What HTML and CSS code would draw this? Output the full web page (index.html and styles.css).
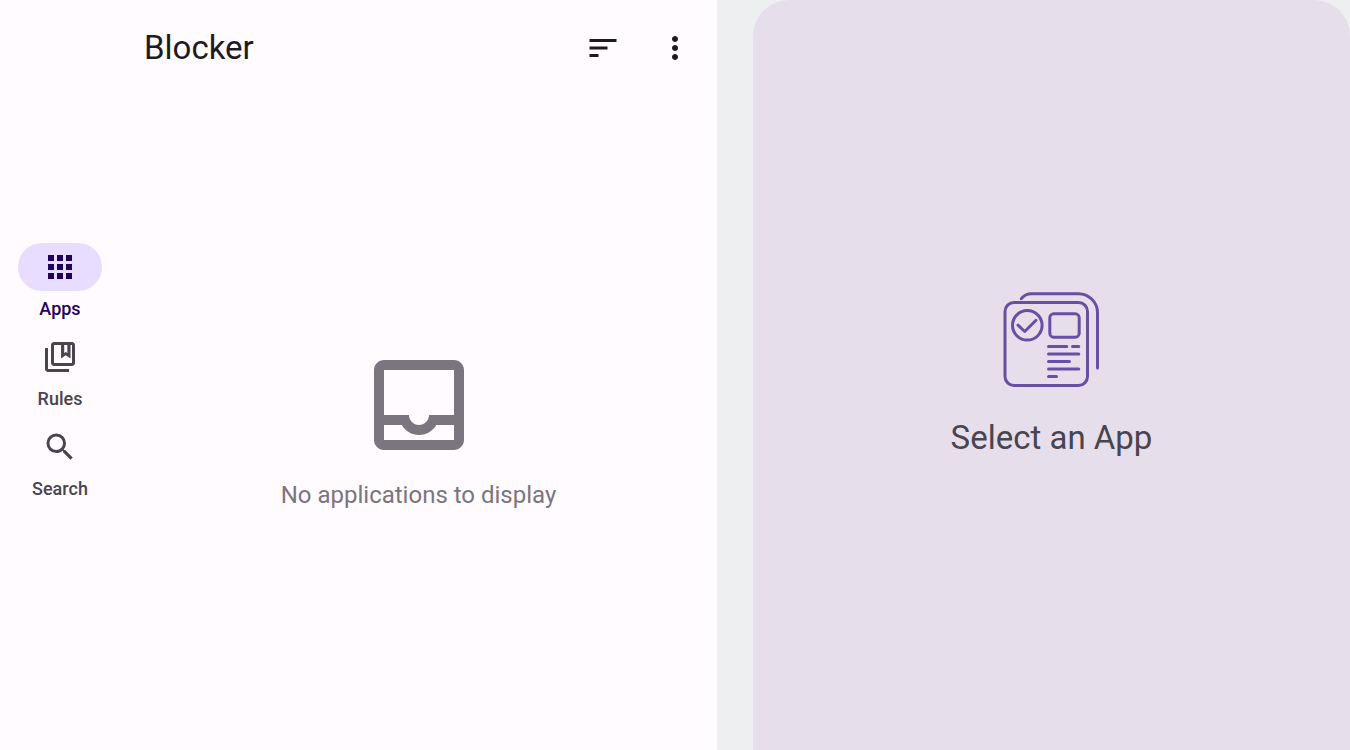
FILE: index.html
```html
<!DOCTYPE html>
<html lang="en">
<head>
<meta charset="utf-8">
<meta name="viewport" content="width=device-width, initial-scale=1">
<title>Blocker</title>
<link rel="stylesheet" href="styles.css">
</head>
<body class="app">
  <nav class="rail" aria-label="Main">
    <button class="rail-item rail-item-active" type="button" aria-current="page">
      <span class="rail-pill"><svg class="icon" viewBox="0 0 24 24" aria-hidden="true"><path d="M4 8h4V4H4v4zm6 12h4v-4h-4v4zm-6 0h4v-4H4v4zm0-6h4v-4H4v4zm6 0h4v-4h-4v4zm6-10v4h4V4h-4zm-6 4h4V4h-4v4zm6 6h4v-4h-4v4zm0 6h4v-4h-4v4z"/></svg></span>
      <span class="rail-label">Apps</span>
    </button>
    <button class="rail-item" type="button">
      <span class="rail-pill"><svg class="icon" viewBox="0 0 24 24" aria-hidden="true"><path d="M4 6H2v14c0 1.100.9 2 2 2h14v-2H4V6z"/><path d="M20 2H8c-1.100 0-2 .9-2 2v12c0 1.100.9 2 2 2h12c1.100 0 2-.9 2-2V4c0-1.100-.9-2-2-2zm0 14H8V4h12v12z"/><path fill-rule="evenodd" d="M12.700 3.500H19V13l-3.150-2.200L12.700 13zM14.800 4v5.300l1.050-.7 1.050.7V4z"/></svg></span>
      <span class="rail-label">Rules</span>
    </button>
    <button class="rail-item" type="button">
      <span class="rail-pill"><svg class="icon" viewBox="0 0 24 24" aria-hidden="true"><path d="M15.500 14h-.79l-.28-.27A6.470 6.470 0 0 0 16 9.500 6.500 6.500 0 1 0 9.500 16c1.610 0 3.090-.59 4.230-1.570l.27.28v.79l5 4.990L20.490 19l-4.990-5zm-6 0C7.010 14 5 11.990 5 9.500S7.010 5 9.500 5 14 7.010 14 9.500 11.990 14 9.500 14z"/></svg></span>
      <span class="rail-label">Search</span>
    </button>
  </nav>

  <main class="list-pane">
    <header class="top-bar">
      <h1 class="title">Blocker</h1>
      <button class="icon-button" type="button" aria-label="Sort"><svg class="icon" viewBox="0 0 24 24" aria-hidden="true"><path d="M3 18h6v-2H3v2zM3 6v2h18V6H3zm0 7h12v-2H3v2z"/></svg></button>
      <button class="icon-button" type="button" aria-label="More options"><svg class="icon" viewBox="0 0 24 24" aria-hidden="true"><path d="M12 8c1.100 0 2-.9 2-2s-.9-2-2-2-2 .9-2 2 .9 2 2 2zm0 2c-1.100 0-2 .9-2 2s.9 2 2 2 2-.9 2-2-.9-2-2-2zm0 6c-1.100 0-2 .9-2 2s.9 2 2 2 2-.9 2-2-.9-2-2-2z"/></svg></button>
    </header>
    <section class="empty">
      <svg class="empty-icon" viewBox="0 0 24 24" aria-hidden="true"><path d="M19 3H5c-1.100 0-2 .9-2 2v14c0 1.100.9 2 2 2h14c1.100 0 2-.9 2-2V5c0-1.100-.9-2-2-2zm0 16H5v-3h3.560c.69 1.190 1.970 2 3.450 2s2.750-.81 3.450-2H19v3zm0-5h-5c0 1.100-.9 2-2 2s-2-.9-2-2H5V5h14v9z"/></svg>
      <p class="empty-text">No applications to display</p>
    </section>
  </main>

  <aside class="detail-pane">
    <svg class="detail-icon" viewBox="0 0 96 96" aria-hidden="true">
      <rect x="1" y="11.500" width="82.500" height="83" rx="9"/>
      <path d="M17.300 7.700Q21 2.700 27.500 2.700H74.500A19 19 0 0 1 93.500 21.700V77"/>
      <circle cx="23.300" cy="34.300" r="14.800"/>
      <path d="M14 34.200 20.700 40.500 32 29.300"/>
      <rect x="45.800" y="22.800" width="29.400" height="23.400" rx="4"/>
      <path d="M44.500 55.500H62.800M68.500 55.500H74.800M44.500 63H74.800M44.500 70.500H65.500M44.500 78H74.800M44.500 85.500H52.500"/>
    </svg>
    <p class="detail-text">Select an App</p>
  </aside>
</body>
</html>
```
FILE: styles.css
```css
* {
  box-sizing: border-box;
}

.app {
  display: grid;
  grid-template-columns: 120px 1fr 36px 1fr;
  min-height: 100vh;
  margin: 0;
  background: #eeeff1;
  color: #1c1b1f;
  font-family: Roboto, "Noto Sans", sans-serif;
}

button {
  padding: 0;
  border: 0;
  background: none;
  color: inherit;
  font: inherit;
  cursor: pointer;
}

.icon {
  display: block;
  width: 36px;
  height: 36px;
  fill: currentColor;
}

.rail {
  display: flex;
  flex-direction: column;
  align-items: center;
  justify-content: center;
  gap: 6px;
  background: #fffbff;
}

.rail-item {
  display: flex;
  flex-direction: column;
  align-items: center;
  gap: 6px;
  padding-bottom: 6px;
  color: #49454e;
}

.rail-item-active {
  color: #22005d;
}

.rail-pill {
  display: grid;
  place-items: center;
  width: 84px;
  height: 48px;
  border-radius: 24px;
}

.rail-item-active .rail-pill {
  background: #e9ddff;
}

.rail-label {
  font-size: 18px;
  font-weight: 500;
  line-height: 24px;
}

.list-pane {
  display: flex;
  flex-direction: column;
  background: #fffbff;
}

.top-bar {
  display: flex;
  align-items: center;
  height: 96px;
  padding: 0 6px 0 24px;
}

.title {
  flex: 1;
  margin: 0;
  font-size: 33px;
  font-weight: 400;
  line-height: 42px;
}

.icon-button {
  display: grid;
  place-items: center;
  width: 72px;
  height: 72px;
}

.empty {
  flex: 1;
  display: flex;
  flex-direction: column;
  align-items: center;
  justify-content: center;
  gap: 12px;
  padding-top: 12px;
  color: #7a757f;
}

.empty-icon {
  width: 120px;
  height: 120px;
  fill: currentColor;
}

.empty-text {
  margin: 0;
  font-size: 24px;
  line-height: 36px;
}

.detail-pane {
  grid-column: 4;
  display: flex;
  flex-direction: column;
  align-items: center;
  justify-content: center;
  gap: 30px;
  border-radius: 36px 36px 0 0;
  background: #e6dfeb;
  color: #49454e;
}

.detail-icon {
  width: 96px;
  height: 96px;
  overflow: visible;
  fill: none;
  stroke: #6750a4;
  stroke-width: 3;
  stroke-linecap: round;
  stroke-linejoin: round;
}

.detail-text {
  margin: 0;
  font-size: 33px;
  line-height: 42px;
}
```
